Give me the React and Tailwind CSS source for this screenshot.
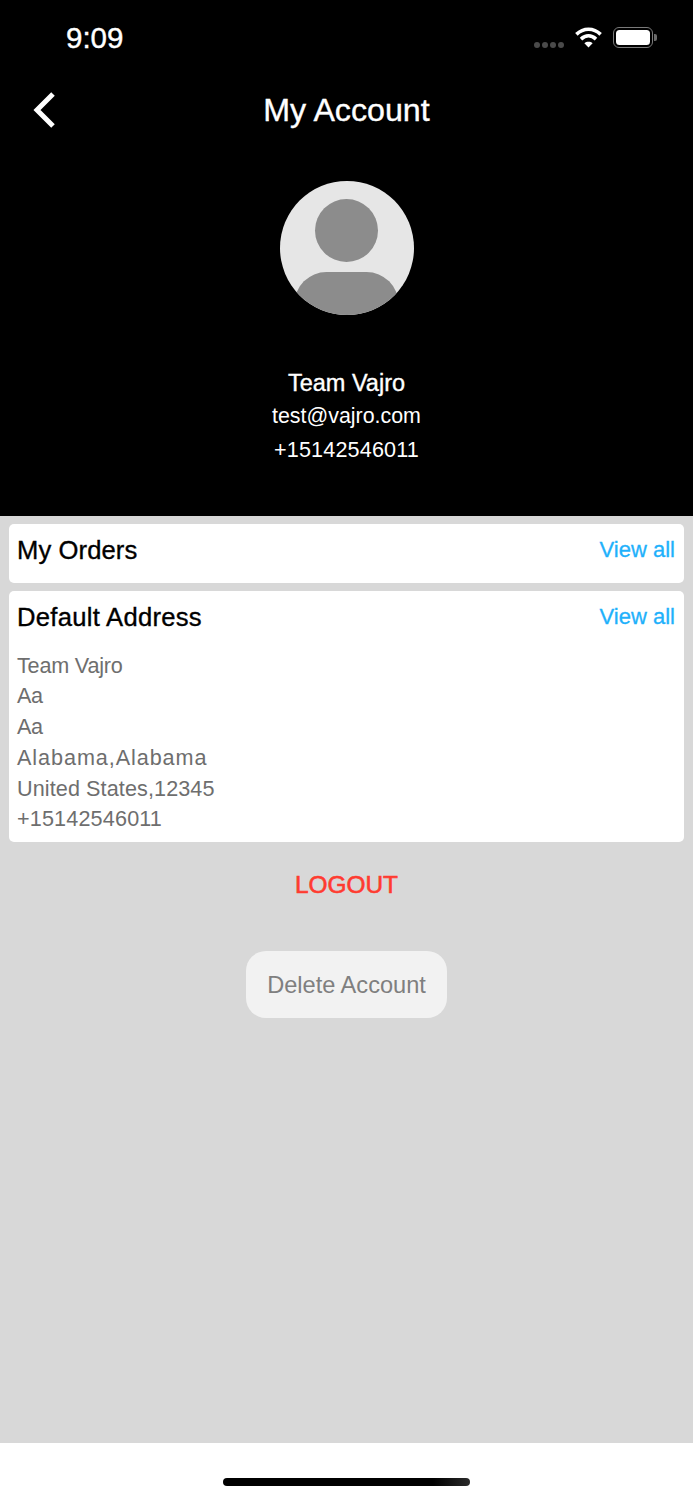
const FONT = "font-['Liberation_Sans',Arial,sans-serif]";

function Wifi() {
  return (
    <svg width="27" height="21" viewBox="0 0 27 21" fill="none" stroke="#fff" strokeWidth="3.6">
      <path d="M1.4 7.4 C8.4 0.6 18.6 0.6 25.6 7.4" />
      <path d="M6 12.1 C10.6 7.8 16.4 7.8 21 12.1" />
      <path d="M13.5 20.5 L9.4 16.2 C11.6 14.4 15.4 14.4 17.6 16.2 Z" fill="#fff" stroke="none" />
    </svg>
  );
}

function Battery() {
  return (
    <div className="flex items-center gap-[1px]">
      <div className="w-[40px] h-[21px] rounded-[6px] border-[1.5px] border-[#7a7a7a] p-[2px]">
        <div className="w-full h-full rounded-[3.5px] bg-white" />
      </div>
      <div className="w-[3px] h-[7px] rounded-r-[2px] bg-[#6a6a6a]" />
    </div>
  );
}

function Avatar() {
  return (
    <svg width="134" height="134" viewBox="0 0 134 134">
      <defs>
        <clipPath id="avatar-clip">
          <circle cx="67" cy="67" r="67" />
        </clipPath>
      </defs>
      <circle cx="67" cy="67" r="67" fill="#e6e6e6" />
      <g clipPath="url(#avatar-clip)">
        <circle cx="66.5" cy="49.5" r="31.5" fill="#8c8c8c" />
        <rect x="14.5" y="91" width="104" height="70" rx="32" fill="#8c8c8c" />
      </g>
    </svg>
  );
}

function SectionHead({ title, titleClass }) {
  return (
    <div className="flex items-center justify-between h-[30px]">
      <span className={`text-[25.6px] leading-[30px] text-black [-webkit-text-stroke:0.35px_#000] ${titleClass}`}>{title}</span>
      <span className="mr-[1px] text-[22px] leading-[30px] text-[#1fb1fb] [-webkit-text-stroke:0.3px_#1fb1fb]">View all</span>
    </div>
  );
}

export default function App() {
  const address = [
    { text: "Team Vajro", cls: "tracking-[-0.2px]" },
    { text: "Aa", cls: "tracking-[-0.5px]" },
    { text: "Aa", cls: "tracking-[-0.5px]" },
    { text: "Alabama,Alabama", cls: "tracking-[0.93px]" },
    { text: "United States,12345", cls: "tracking-[0.1px]" },
    { text: "+15142546011", cls: "tracking-[0.16px]" },
  ];
  return (
    <div className={`${FONT} w-[693px] h-[1500px] flex flex-col bg-[#d8d8d8] overflow-hidden`}>
      <header className="h-[516px] shrink-0 bg-black text-white flex flex-col">
        <div className="h-[76px] pl-[66px] pr-[36px] flex items-start justify-between">
          <span className="mt-[21px] text-[29.5px] leading-[34px] [-webkit-text-stroke:0.4px_#fff]">9:09</span>
          <div className="mt-[27px] flex items-end">
            <div className="flex gap-[2px]">
              <span className="w-[6px] h-[6px] rounded-full bg-[#4a4a4a]" />
              <span className="w-[6px] h-[6px] rounded-full bg-[#4a4a4a]" />
              <span className="w-[6px] h-[6px] rounded-full bg-[#4a4a4a]" />
              <span className="w-[6px] h-[6px] rounded-full bg-[#4a4a4a]" />
            </div>
            <div className="ml-[11px]"><Wifi /></div>
            <div className="ml-[11px]"><Battery /></div>
          </div>
        </div>
        <div className="relative h-[68px] flex items-center justify-center">
          <svg className="absolute left-[32px] top-[15px]" width="24" height="38" viewBox="0 0 24 38" fill="none" stroke="#fff" strokeWidth="5">
            <path d="M21 3 L5 19 L21 35" />
          </svg>
          <span className="text-[32.2px] leading-[40px] [-webkit-text-stroke:0.35px_#fff]">My Account</span>
        </div>
        <div className="mt-[37px] flex justify-center"><Avatar /></div>
        <div className="mt-[52px] flex flex-col items-center">
          <span className="text-[23.5px] leading-[33px] [-webkit-text-stroke:0.35px_#fff]">Team Vajro</span>
          <span className="text-[21.4px] leading-[33px]">test@vajro.com</span>
          <span className="text-[21.6px] leading-[33px] tracking-[0.16px]">+15142546011</span>
        </div>
      </header>

      <main className="flex-1 flex flex-col">
        <section className="mx-[9px] mt-[8px] h-[58.5px] rounded-[5px] bg-white px-[8px] pt-[11px]">
          <SectionHead title="My Orders" titleClass="tracking-[0.1px]" />
        </section>
        <section className="mx-[9px] mt-[8.5px] h-[250.5px] rounded-[5px] bg-white px-[8px] pt-[11px]">
          <SectionHead title="Default Address" titleClass="tracking-[0.28px]" />
          <div className="mt-[18.5px] text-[21.6px] leading-[30.8px] text-[#6e6e6e]">
            {address.map((line, i) => (
              <div key={i} className={line.cls}>{line.text}</div>
            ))}
          </div>
        </section>
        <div className="mt-[27px] h-[34px] flex items-center justify-center text-[24.4px] text-[#ff3b30] [-webkit-text-stroke:0.6px_#ff3b30]">LOGOUT</div>
        <div className="mt-[48px] flex justify-center">
          <button className="w-[201px] h-[67px] pt-[3px] rounded-[20px] bg-[#f2f2f2] text-[23.6px] text-[#7f7f7f]">Delete Account</button>
        </div>
      </main>

      <footer className="h-[57px] shrink-0 bg-white flex justify-center pt-[35px]">
        <div className="w-[247px] h-[8px] rounded-full bg-[linear-gradient(90deg,#000_85%,#2a2a2a_100%)]" />
      </footer>
    </div>
  );
}
